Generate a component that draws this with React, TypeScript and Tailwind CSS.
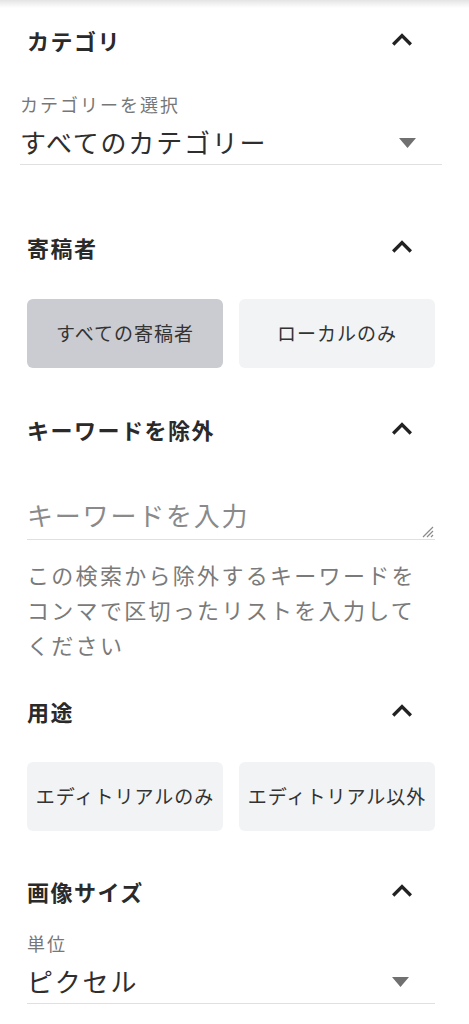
import React from "react";

const FONT = { fontFamily: '"Noto Sans CJK JP", "Noto Sans", sans-serif' };

function Chevron() {
  return (
    <svg width="40" height="40" viewBox="0 0 24 24" className="shrink-0">
      <path d="M12 8l-6 6 1.41 1.41L12 10.83l4.59 4.58L18 14z" fill="#222222" />
    </svg>
  );
}

function Caret() {
  return (
    <svg width="17" height="10" viewBox="0 0 17 10" className="shrink-0">
      <path d="M0 0h17L8.5 10z" fill="#707070" />
    </svg>
  );
}

function Heading({ title, className = "" }: { title: string; className?: string }) {
  return (
    <div className={`flex h-[56px] items-center justify-between ${className}`}>
      <div className="text-[22px] font-bold tracking-[1.5px] text-[#2a2a2a]">{title}</div>
      <div className="mr-[13px]">
        <Chevron />
      </div>
    </div>
  );
}

function Select({ label, value, className = "" }: { label: string; value: string; className?: string }) {
  return (
    <div className={`border-b-[1.5px] border-[#e0e0e0] pb-[4px] ${className}`}>
      <div className="h-[24px] text-[18px] leading-[24px] tracking-[2px] text-[#777777]">{label}</div>
      <div className="mt-[8px] flex h-[36px] items-center justify-between">
        <div className="text-[26px] leading-[36px] tracking-[1.8px] text-[#2e2e2e]">{value}</div>
        <div className="mr-[26px] mt-[2px]">
          <Caret />
        </div>
      </div>
    </div>
  );
}

function Toggle({ options, selected }: { options: string[]; selected: number }) {
  return (
    <div className="grid grid-cols-2 gap-[16px]">
      {options.map((o, i) => (
        <div
          key={o}
          className={`flex h-[69px] items-center justify-center rounded-[6px] text-[19px] tracking-[1px] text-[#333333] ${
            i === selected ? "bg-[#cbccd1]" : "bg-[#f2f3f5]"
          }`}
        >
          {o}
        </div>
      ))}
    </div>
  );
}

export default function App() {
  return (
    <div className="min-h-[1024px] w-[469px] bg-white" style={FONT}>
      <div className="h-[8px] bg-gradient-to-b from-[#e4e4e4] to-white" />
      <div className="pl-[27px] pr-[34px]">
        <Heading title="カテゴリ" className="mt-[4px]" />
        <Select label="カテゴリーを選択" value="すべてのカテゴリー" className="mx-[-7px] mt-[24px]" />

        <Heading title="寄稿者" className="mt-[54px]" />
        <div className="mt-[24px]">
          <Toggle options={["すべての寄稿者", "ローカルのみ"]} selected={0} />
        </div>

        <Heading title="キーワードを除外" className="mt-[33px]" />
        <div className="relative mt-[40px] border-b-[1.5px] border-[#e0e0e0] pb-[6px]">
          <div className="h-[36px] text-[26px] leading-[36px] tracking-[1.8px] text-[#8a8a8a]">キーワードを入力</div>
          <svg width="14" height="14" viewBox="0 0 14 14" className="absolute bottom-[1px] right-[1px]">
            <path d="M13 3L3 13M13 7L7 13M13 11L11 13" stroke="#8a8a8a" strokeWidth="1.2" />
          </svg>
        </div>
        <div className="mt-[17px] w-[400px] text-[22px] leading-[35px] tracking-[2.3px] text-[#7a7a7a]">
          この検索から除外するキーワードをコンマで区切ったリストを入力してください
        </div>

        <Heading title="用途" className="mt-[21px]" />
        <div className="mt-[23px]">
          <Toggle options={["エディトリアルのみ", "エディトリアル以外"]} selected={-1} />
        </div>

        <Heading title="画像サイズ" className="mt-[32px]" />
        <Select label="単位" value="ピクセル" className="mt-[12px]" />
      </div>
    </div>
  );
}
